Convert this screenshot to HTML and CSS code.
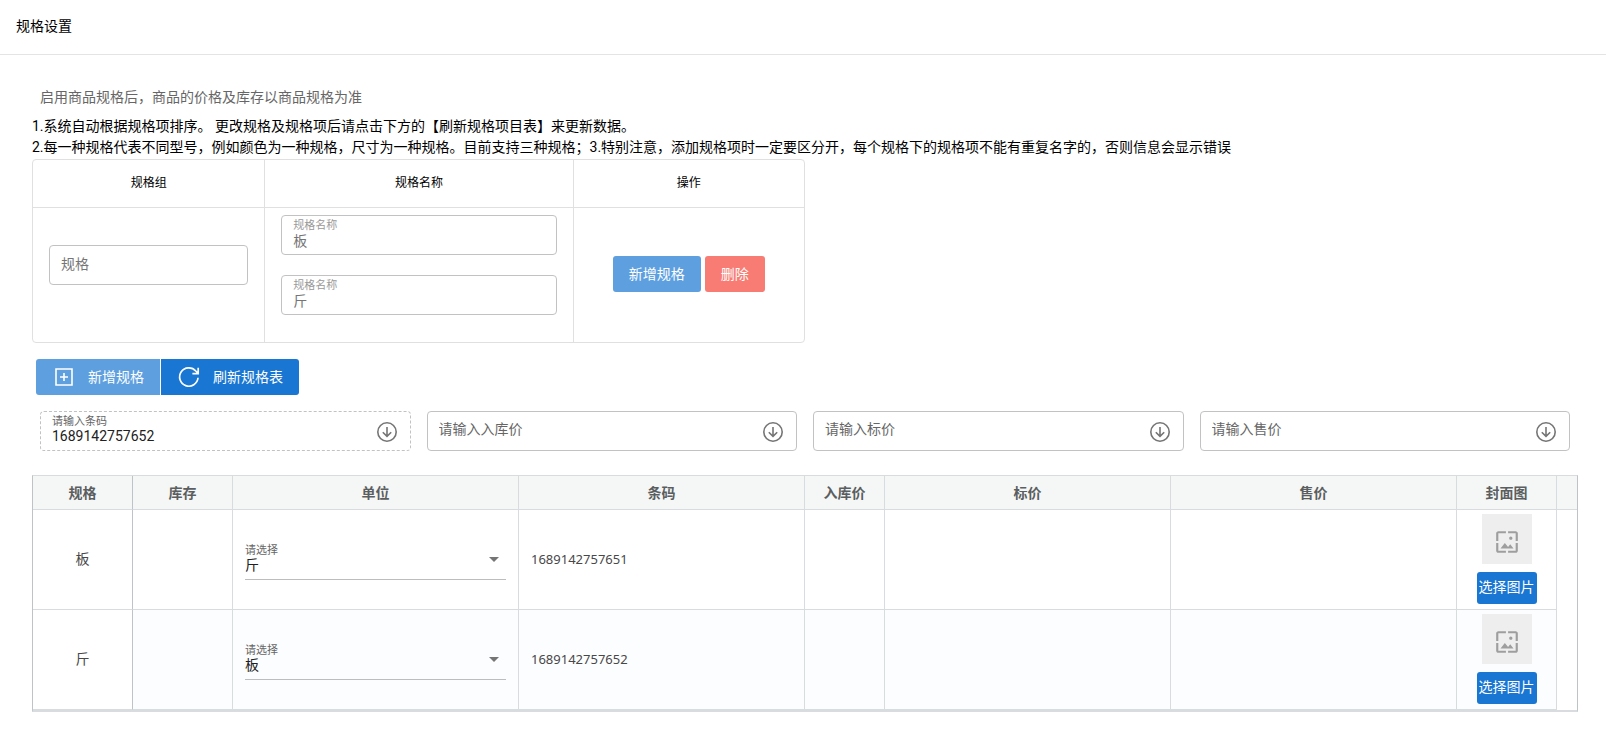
FILE: index.html
```html
<!DOCTYPE html>
<html lang="zh-CN">
<head>
<meta charset="utf-8">
<title>规格设置</title>
<link rel="stylesheet" href="styles.css">
</head>
<body>
<svg class="sprite" aria-hidden="true">
  <symbol id="i-down" viewBox="0 0 24 24"><g fill="none" stroke="currentColor" stroke-width="1.6"><circle cx="12" cy="12" r="9.2"/><path d="M12 7v9.4M7.8 12.2l4.2 4.2 4.2-4.2"/></g></symbol>
  <symbol id="i-add" viewBox="0 0 24 24"><g fill="none" stroke="currentColor" stroke-width="1.6"><path d="M4 4h16v16H4zM12 8v8M8 12h8"/></g></symbol>
  <symbol id="i-refresh" viewBox="0 0 24 24"><path d="M21 12.800A9.200 9.200 0 1 1 18.800 6L21 8.200M21.200 2.800v5.800h-5.800" fill="none" stroke="currentColor" stroke-width="1.7"/></symbol>
  <symbol id="i-image" viewBox="0 0 24 24"><path fill="currentColor" d="M4 4h7V2H4c-1.100 0-2 .9-2 2v7h2V4zm6 9l-4 5h12l-3-4-2.030 2.710L10 13zm7-4.500c0-.83-.67-1.500-1.500-1.500S14 7.670 14 8.500s.67 1.500 1.500 1.500S17 9.330 17 8.500zM20 2h-7v2h7v7h2V4c0-1.100-.9-2-2-2zm0 18h-7v2h7c1.100 0 2-.9 2-2v-7h-2v7zM4 13H2v7c0 1.100.9 2 2 2h7v-2H4v-7z"/></symbol>
</svg>
<header class="page-header"><h1>规格设置</h1></header>
<main class="content">
  <p class="caption">启用商品规格后，商品的价格及库存以商品规格为准</p>
  <p class="note">1.系统自动根据规格项排序。 更改规格及规格项后请点击下方的【刷新规格项目表】来更新数据。</p>
  <p class="note">2.每一种规格代表不同型号，例如颜色为一种规格，尺寸为一种规格。目前支持三种规格；3.特别注意，添加规格项时一定要区分开，每个规格下的规格项不能有重复名字的，否则信息会显示错误</p>

  <table class="groups">
    <colgroup><col class="g-side"><col class="g-mid"><col class="g-side"></colgroup>
    <thead><tr><th>规格组</th><th>规格名称</th><th>操作</th></tr></thead>
    <tbody><tr>
      <td><div class="field muted"><input type="text" aria-label="规格组" value="规格"></div></td>
      <td><div class="names">
        <div class="field muted"><label for="n1">规格名称</label><input id="n1" type="text" value="板"></div>
        <div class="field muted"><label for="n2">规格名称</label><input id="n2" type="text" value="斤"></div>
      </div></td>
      <td><div class="actions"><button class="btn light">新增规格</button><button class="btn danger">删除</button></div></td>
    </tr></tbody>
  </table>

  <div class="toolbar">
    <button class="btn light with-icon"><svg class="icon"><use href="#i-add"/></svg>新增规格</button>
    <button class="btn primary with-icon"><svg class="icon"><use href="#i-refresh"/></svg>刷新规格表</button>
  </div>

  <div class="filters">
    <div class="field dashed"><label for="f1">请输入条码</label><input id="f1" type="text" value="1689142757652"><button class="fill" aria-label="填充条码"><svg class="icon"><use href="#i-down"/></svg></button></div>
    <div class="field"><input type="text" aria-label="入库价" placeholder="请输入入库价"><button class="fill" aria-label="填充入库价"><svg class="icon"><use href="#i-down"/></svg></button></div>
    <div class="field"><input type="text" aria-label="标价" placeholder="请输入标价"><button class="fill" aria-label="填充标价"><svg class="icon"><use href="#i-down"/></svg></button></div>
    <div class="field"><input type="text" aria-label="售价" placeholder="请输入售价"><button class="fill" aria-label="填充售价"><svg class="icon"><use href="#i-down"/></svg></button></div>
  </div>

  <table class="grid">
    <colgroup><col class="c-first"><col class="c-100"><col><col><col class="c-80"><col><col><col class="c-100"><col class="c-end"></colgroup>
    <thead><tr><th>规格</th><th>库存</th><th>单位</th><th>条码</th><th>入库价</th><th>标价</th><th>售价</th><th>封面图</th><th></th></tr></thead>
    <tbody>
      <tr>
        <td class="pinned">板</td><td></td>
        <td><div class="select"><label for="s1">请选择</label><select id="s1"><option>斤</option><option>板</option></select></div></td>
        <td class="code">1689142757651</td><td></td><td></td><td></td>
        <td><div class="cover"><div class="thumb"><svg class="picture"><use href="#i-image"/></svg></div><button class="btn primary pick">选择图片</button></div></td>
        <td class="end"></td>
      </tr>
      <tr>
        <td class="pinned">斤</td><td></td>
        <td><div class="select"><label for="s2">请选择</label><select id="s2"><option>板</option><option>斤</option></select></div></td>
        <td class="code">1689142757652</td><td></td><td></td><td></td>
        <td><div class="cover"><div class="thumb"><svg class="picture"><use href="#i-image"/></svg></div><button class="btn primary pick">选择图片</button></div></td>
        <td class="end"></td>
      </tr>
    </tbody>
  </table>
</main>
</body>
</html>
```
FILE: styles.css
```css
* { box-sizing: border-box; }
body { margin: 0; background: #fff; color: #000; font: 14px/21px Roboto, "Noto Sans CJK SC", sans-serif; }
button, input, select { font: inherit; color: inherit; margin: 0; }
h1, p { margin: 0; }
.sprite { display: none; }
.icon { width: 24px; height: 24px; flex: none; display: block; }

.page-header { padding: 16px; border-bottom: 1px solid #e4e4e4; }
.page-header h1 { padding-bottom: 2px; font-size: 14px; font-weight: 400; line-height: 20px; }

.content { padding: 32px 28px 28px 32px; }
.caption { padding: 0 8px; margin-bottom: 8px; color: #666; }

.groups { width: 50%; max-width: 773px; margin-top: 1px; table-layout: fixed; border-collapse: separate; border-spacing: 0; border: 1px solid #e0e0e0; border-radius: 4px; }
.g-side { width: 30%; }
.g-mid { width: 40%; }
.groups th { height: 48px; padding: 0 16px; font-size: 12px; font-weight: 400; border-bottom: 1px solid #e0e0e0; }
.groups td { height: 134px; padding: 6px 16px; }
.groups th + th, .groups td + td { border-left: 1px solid #e0e0e0; }
.groups td > .field { margin-bottom: 20px; }
.names { display: grid; gap: 20px; padding-bottom: 20px; }
.actions { display: flex; justify-content: center; gap: 4px; padding-bottom: 2px; }

.field { position: relative; display: flex; align-items: center; height: 40px; padding: 0 11px; border: 1px solid #c2c2c2; border-radius: 4px; color: #212121; }
.field.dashed { border-style: dashed; }
.field.muted { color: #757575; }
.field label { position: absolute; top: 2px; left: 11px; font-size: 11px; line-height: 16px; color: #666; }
.field.muted label { color: #999; }
.field input { flex: 1; min-width: 0; width: 100%; height: 38px; padding: 0 0 4px; border: 0; outline: 0; background: none; }
.field label + input { padding: 9px 0 0; }
.field input::placeholder { color: #666; opacity: 1; }
.fill { padding: 2px 0 0; border: 0; background: none; color: #757575; }

.btn { display: inline-flex; align-items: center; justify-content: center; height: 36px; padding: 0 16px; border: 0; border-radius: 3px; color: #fff; white-space: nowrap; }
.light { background: #5e9fe0; }
.primary { background: #1976d2; }
.danger { background: #f87c74; }
.with-icon { gap: 12px; }
.toolbar { display: flex; gap: 1px; padding: 16px 4px; }
.toolbar .btn:first-child { border-radius: 3px 0 0 3px; }
.toolbar .btn:last-child { border-radius: 0 3px 3px 0; }

.filters { display: grid; grid-template-columns: repeat(4, 1fr); gap: 16px; padding: 0 8px 24px; }

.grid { width: 100%; table-layout: fixed; border-collapse: separate; border-spacing: 0; border: 1px solid #bdc3c7; border-top-color: #d9dcde; border-bottom: 2px solid #d9dcde; color: #484848; }
.c-first, .c-100 { width: 100px; }
.c-80 { width: 80px; }
.c-end { width: 20px; }
.grid th { height: 34px; padding: 1px 0 0; background: #f5f7f7; color: #5b5e60; font-weight: 700; border-bottom: 1px solid #d9dcde; }
.grid td { height: 100px; padding: 0 12px; border-bottom: 1px solid #d9dcde; }
.grid th:not(:last-child), .grid td:not(:last-child) { border-right: 1px solid #d9dcde; }
.grid th:first-child, .grid td.pinned { border-right-color: #bdc3c7; }
.grid tbody tr:nth-child(even) td { background: #fcfdfe; }
.grid tbody tr td.pinned, .grid tbody tr td.end { background: #fff; }
.grid td.end { border-bottom: 0; padding: 0; }
.pinned { text-align: center; }
.code { font-family: "Noto Sans", sans-serif; font-size: 13px; }
.select { position: relative; height: 40px; border-bottom: 1px solid #bdbdbd; color: #212121; }
.select label { position: absolute; top: 3px; left: 0; font-size: 11px; line-height: 16px; color: #666; }
.select select { appearance: none; width: 100%; height: 39px; padding: 12px 0 0; border: 0; outline: 0; background: none; }
.select::after { content: ""; position: absolute; right: 7px; top: 17px; border: 5px solid transparent; border-top-color: #757575; border-bottom: 0; }
.grid td > .cover { margin: 0 -12px; }
.cover { display: flex; flex-direction: column; align-items: center; gap: 8px; padding-bottom: 2px; }
.thumb { display: flex; justify-content: center; width: 50px; height: 50px; padding-top: 15px; background: #eee; color: #9e9e9e; }
.picture { width: 26px; height: 26px; }
.pick { width: 60px; height: 32px; padding: 0; }
```
